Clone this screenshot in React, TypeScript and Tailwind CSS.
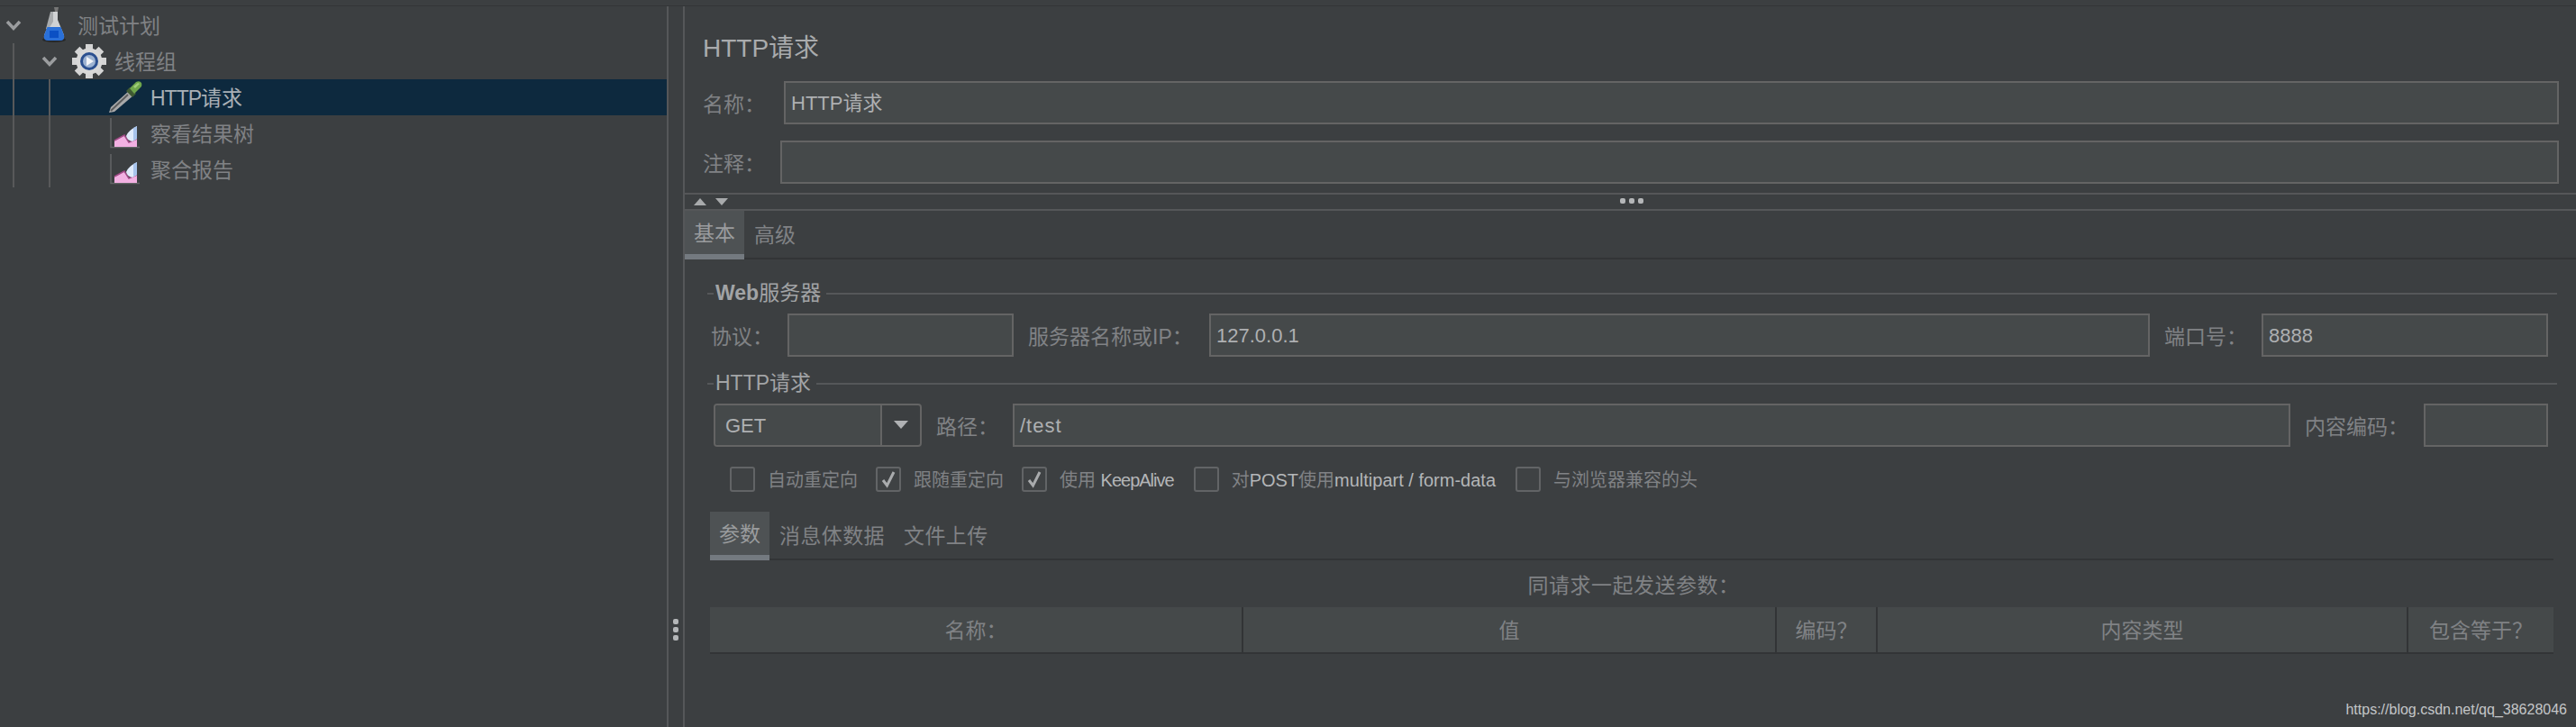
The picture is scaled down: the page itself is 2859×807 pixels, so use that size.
const F = { fontFamily: '"Liberation Sans","Noto Sans CJK SC",sans-serif' };

function Flask() {
  return (
    <svg width="28" height="40" viewBox="0 0 28 40" className="block">
      <ellipse cx="14" cy="36" rx="13" ry="3" fill="#26282a" />
      <path d="M19 0 L18 5 L15 5 L14 0Z" fill="#777" />
      <path d="M10 5 H18 V14 L25 31 Q26 36 21 36 H7 Q2 36 3 31 L10 14Z" fill="#d0d2d4" />
      <path d="M10 5 H13 V16 L8 24 H5Z" fill="#a9acae" />
      <path d="M6.5 22 H21.5 L25 31 Q26 37 21 37 H7 Q2 37 3 31Z" fill="#2a70d8" />
      <path d="M9 26 H19 L19 34 H9Z" fill="#0b50c4" />
    </svg>
  );
}

function Gear() {
  const teeth = [0, 45, 90, 135, 180, 225, 270, 315];
  return (
    <svg width="38" height="38" viewBox="0 0 38 38" className="block">
      {teeth.map((a) => (
        <rect key={a} x="15" y="0" width="8" height="9" fill="#d4d4d4" transform={`rotate(${a} 19 19)`} />
      ))}
      <circle cx="19" cy="19" r="14.5" fill="#d8d8d8" />
      <circle cx="19" cy="19" r="10" fill="#2b4f8f" />
      <circle cx="19" cy="19" r="7" fill="#9fb4d2" />
      <path d="M16 14 L24 19 L16 24Z" fill="#f2f4f8" />
    </svg>
  );
}

function Dropper() {
  return (
    <svg width="38" height="36" viewBox="0 0 38 36" className="block">
      <path d="M1 35 L3 29 L23 11 L28 16 L7 34Z" fill="#a9a9a9" />
      <path d="M3 33 L22 15" stroke="#5d5d5d" strokeWidth="2" />
      <path d="M20 11 L24 7 L31 14 L27 18Z" fill="#3f5a32" />
      <path d="M24 8 L31 1 Q35 -1 37 2 Q38 6 36 7 L29 14Z" fill="#6fa64c" />
      <path d="M28 6 L33 2 L35 3 L30 8Z" fill="#9fce7a" />
    </svg>
  );
}

function Graph() {
  return (
    <svg width="34" height="34" viewBox="0 0 34 34" className="block">
      <path d="M1 0 V32.5 H33" fill="none" stroke="#636567" strokeWidth="1.5" />
      <path d="M5 32 V25 L16 19 L21 27 L30 23 V32Z" fill="#f2b0e2" />
      <path d="M5 25 L16 19 L21 27 L30 23" fill="none" stroke="#a04a86" strokeWidth="1.5" />
      <path d="M18 20 Q20 14 30 9 V23 L25 26 Q19 25 18 20Z" fill="#dfeafa" />
      <path d="M26 11 L30 9 V23 L26 25Z" fill="#a8c4ec" />
    </svg>
  );
}

function Chevron() {
  return (
    <svg width="18" height="13" viewBox="0 0 18 13" className="block">
      <path d="M2 2 L9 9.5 L16 2" fill="none" stroke="#9b9d9f" strokeWidth="3.5" />
    </svg>
  );
}

function Row({ pl, chevronGap, icon, text, selected, iconW, gap }: { pl: number; chevronGap?: number; icon: React.ReactNode; text: React.ReactNode; selected?: boolean; iconW: number; gap: number }) {
  return (
    <div className={`flex h-[40px] items-center ${selected ? 'bg-[#0d293e] text-[#a9b0b6]' : 'text-[#808285]'}`} style={{ paddingLeft: pl }}>
      {chevronGap !== undefined ? <div style={{ marginRight: chevronGap }}><Chevron /></div> : null}
      <div className="flex shrink-0 justify-center" style={{ width: iconW, marginRight: gap }}>{icon}</div>
      <span className="pt-[3px] text-[23px] leading-none whitespace-nowrap">{text}</span>
    </div>
  );
}

function Tree() {
  return (
    <div className="relative w-[740px] shrink-0 pt-[1px]">
      <div className="absolute left-[14px] top-[41px] h-[160px] w-[2px] bg-[#58595a]" />
      <div className="absolute left-[54px] top-[81px] h-[120px] w-[2px] bg-[#58595a]" />
      <Row pl={6} chevronGap={22} icon={<Flask />} iconW={28} gap={12} text="测试计划" />
      <Row pl={46} chevronGap={16} icon={<Gear />} iconW={38} gap={9} text="线程组" />
      <Row pl={120} icon={<Dropper />} iconW={38} gap={9} text={<><span className="tracking-[-1px]">HTTP</span>请求</>} selected />
      <Row pl={122} icon={<Graph />} iconW={34} gap={11} text="察看结果树" />
      <Row pl={122} icon={<Graph />} iconW={34} gap={11} text="聚合报告" />
    </div>
  );
}

function Lbl({ text, className = '' }: { text: string; className?: string }) {
  return <span className={`pt-[4px] text-[23px] leading-none whitespace-nowrap text-[#808285] ${className}`}>{text}</span>;
}

function Field({ value, className = '' }: { value?: React.ReactNode; className?: string }) {
  return (
    <div className={`flex h-[48px] items-center border-2 border-[#646464] bg-[#45494a] pt-[2px] pl-[6px] text-[22px] leading-none whitespace-nowrap text-[#aeb0b2] ${className}`}>
      {value}
    </div>
  );
}

function Legend({ text, className = '' }: { text: React.ReactNode; className?: string }) {
  return (
    <div className={`-ml-[3px] flex h-[23px] items-center ${className}`}>
      <div className="h-[2px] w-[7px] bg-[#555759]" />
      <span className="px-[2px] text-[23px] leading-none whitespace-nowrap text-[#a2a4a6]">{text}</span>
      <div className="ml-[4px] h-[2px] flex-1 bg-[#555759]" />
    </div>
  );
}

function Check({ checked, label, mr }: { checked?: boolean; label: React.ReactNode; mr: number }) {
  return (
    <div className="flex items-center" style={{ marginRight: mr }}>
      <div className="mr-[14px] flex h-[28px] w-[28px] items-center justify-center rounded-[3px] border-2 border-[#626466] bg-[#3f4244]">
        {checked ? (
          <svg width="18" height="20" viewBox="0 0 18 20">
            <path d="M3 11 L7.5 17 L15 2" fill="none" stroke="#a9abad" strokeWidth="3" />
          </svg>
        ) : null}
      </div>
      <span className="pt-[2px] text-[20px] leading-none whitespace-nowrap text-[#808285]">{label}</span>
    </div>
  );
}

function HeadCell({ text, className = '' }: { text: string; className?: string }) {
  return (
    <div className={`flex h-full items-center justify-center border-r-2 border-[#323436] pt-[3px] text-[23px] leading-none whitespace-nowrap text-[#808285] last:border-r-0 ${className}`}>
      {text}
    </div>
  );
}

function Dot() {
  return <div className="h-[6px] w-[6px] rounded-[2px] bg-[#b4b6b8]" />;
}

export default function App() {
  return (
    <div className="relative flex h-[807px] w-[2859px] flex-col overflow-hidden bg-[#3c3f41]" style={F}>
      <div className="h-[7px] shrink-0 border-b border-[#333537] bg-[#3c3f41]" />
      <div className="flex min-h-0 flex-1">
        <Tree />
        <div className="flex w-[20px] shrink-0 justify-center border-x-2 border-[#555759] pt-[680px]">
          <div className="flex flex-col gap-[3px]">
            <Dot />
            <Dot />
            <Dot />
          </div>
        </div>
        <div className="min-w-0 flex-1">
          <div className="pl-[20px] pr-[19px]">
            <div className="flex h-[83px] items-center pt-[10px] text-[28px] leading-none text-[#a9abad]">HTTP请求</div>
            <div className="flex items-center">
              <Lbl text="名称：" className="w-[90px] shrink-0" />
              <Field value="HTTP请求" className="flex-1" />
            </div>
            <div className="mt-[18px] flex items-center">
              <Lbl text="注释：" className="w-[86px] shrink-0" />
              <Field className="flex-1" />
            </div>
          </div>

          <div className="relative mt-[10px] flex h-[20px] items-center border-y-2 border-[#555759] pl-[10px]">
            <svg width="46" height="10" viewBox="0 0 46 10" className="block">
              <path d="M0 9 L7 1 L14 9Z" fill="#a8aaac" />
              <path d="M24 1 H38 L31 9Z" fill="#a8aaac" />
            </svg>
            <div className="absolute left-[1038px] top-[4px] flex gap-[4px]">
              <Dot />
              <Dot />
              <Dot />
            </div>
          </div>

          <div className="flex h-[54px] items-stretch border-b-2 border-[#323436]">
            <div className="-mb-[2px] flex w-[66px] items-center justify-center border-b-[6px] border-[#747a80] bg-[#4e5254] pt-[3px] text-[23px] leading-none text-[#9a9c9e]">基本</div>
            <div className="ml-[11px] flex items-center pt-[3px] text-[23px] leading-none text-[#808285]">高级</div>
          </div>

          <div className="pl-[28px] pr-[21px]">
            <Legend text={<><span className="font-bold">Web</span>服务器</>} className="mt-[26px]" />
            <div className="mt-[11px] flex items-center pr-[10px]">
              <Lbl text="协议：" className="ml-[1px] w-[85px] shrink-0" />
              <Field className="w-[251px] shrink-0" />
              <Lbl text="服务器名称或IP：" className="ml-[16px] w-[201px] shrink-0" />
              <Field value="127.0.0.1" className="flex-1" />
              <Lbl text="端口号：" className="ml-[16px] w-[108px] shrink-0" />
              <Field value="8888" className="w-[318px] shrink-0" />
            </div>
            <Legend text="HTTP请求" className="mt-[18px]" />
            <div className="mt-[11px] flex items-center pr-[10px]">
              <div className="ml-[4px] flex h-[48px] w-[231px] shrink-0 rounded-[4px] border-2 border-[#646464]">
                <div className="flex flex-1 items-center rounded-l-[3px] bg-[#45494a] pt-[2px] pl-[11px] text-[22px] leading-none text-[#aeb0b2]">GET</div>
                <div className="flex w-[44px] items-center justify-center border-l-2 border-[#646464]">
                  <svg width="16" height="10" viewBox="0 0 16 10"><path d="M0 0 H16 L8 9Z" fill="#b0b2b4" /></svg>
                </div>
              </div>
              <Lbl text="路径：" className="ml-[16px] w-[85px] shrink-0" />
              <Field value={<span className="tracking-[1px]">/test</span>} className="flex-1" />
              <Lbl text="内容编码：" className="ml-[16px] w-[132px] shrink-0" />
              <Field className="w-[138px] shrink-0" />
            </div>
            <div className="mt-[22px] flex h-[28px] items-center pl-[22px]">
              <Check label="自动重定向" mr={20} />
              <Check checked label="跟随重定向" mr={20} />
              <Check checked label={<>使用 <span className="tracking-[-1px] text-[#b4b6b8]">KeepAlive</span></>} mr={22} />
              <Check label={<>对<span className="text-[#b4b6b8]">POST</span>使用<span className="text-[#b4b6b8]">multipart / form-data</span></>} mr={22} />
              <Check label="与浏览器兼容的头" mr={0} />
            </div>
            <div className="mt-[22px] mr-[4px] flex h-[54px] items-stretch border-b-2 border-[#323436]">
              <div className="-mb-[2px] flex w-[66px] items-center justify-center border-b-[6px] border-[#747a80] bg-[#4e5254] pt-[3px] text-[23px] leading-none text-[#9a9c9e]">参数</div>
              <div className="ml-[11px] flex items-center pt-[3px] text-[23px] leading-none tracking-[0.4px] text-[#808285]">消息体数据</div>
              <div className="ml-[21px] flex items-center pt-[3px] text-[23px] leading-none tracking-[0.4px] text-[#808285]">文件上传</div>
            </div>
            <div className="flex h-[52px] items-center justify-center pt-[4px] text-[23px] leading-none tracking-[0.5px] text-[#808285]">同请求一起发送参数：</div>
            <div className="mr-[4px] flex h-[52px] items-center border-b-2 border-[#323436] bg-[#45494a]">
              <HeadCell text="名称：" className="w-[592px]" />
              <HeadCell text="值" className="w-[592px]" />
              <HeadCell text="编码？" className="w-[112px]" />
              <HeadCell text="内容类型" className="w-[589px]" />
              <HeadCell text="包含等于？" className="flex-1" />
            </div>
          </div>
        </div>
      </div>
      <div className="absolute bottom-[11px] right-[10px] text-[16px] leading-none text-[#c4c6c8]">https://blog.csdn.net/qq_38628046</div>
    </div>
  );
}
